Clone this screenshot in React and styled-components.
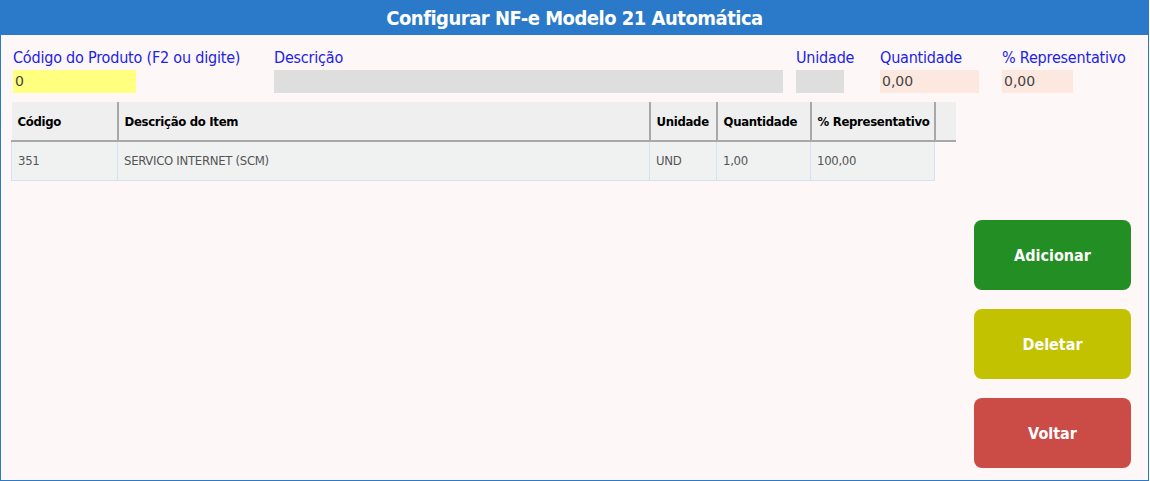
import React from 'react';
import styled, { createGlobalStyle } from 'styled-components';

const GlobalStyle = createGlobalStyle`
  html, body {
    margin: 0;
    padding: 0;
    background: #ffffff;
  }
  * { box-sizing: border-box; }
`;

const narrow = `"DejaVu Sans Condensed", "DejaVu Sans", sans-serif`;

const Window = styled.div`
  width: 1149px;
  height: 481px;
  background: #fdf8f7;
  border: 1px solid #2a7ac9;
  border-top: none;
  display: flex;
  flex-direction: column;
`;

const Header = styled.div`
  height: 35px;
  background: #2a7ac9;
  color: #ffffff;
  display: flex;
  align-items: center;
  justify-content: center;
  font-family: ${narrow};
  font-weight: 700;
  font-size: 20px;
  letter-spacing: -0.5px;
`;

const FieldRow = styled.div`
  display: flex;
  padding: 13px 0 0 12px;
  height: 67px;
`;

const Field = styled.div`
  display: flex;
  flex-direction: column;
  width: ${({ $w }) => $w}px;
`;

const Label = styled.label`
  font-family: ${narrow};
  font-size: 16px;
  letter-spacing: -0.2px;
  color: #2222e6;
  height: 22px;
  white-space: nowrap;
`;

const Input = styled.div`
  width: ${({ $w }) => $w}px;
  height: 23px;
  background: ${({ $bg }) => $bg};
  font-family: "DejaVu Sans", sans-serif;
  font-size: 14px;
  color: #444;
  padding: 3px 2px 0;
`;

const Body = styled.div`
  flex: 1;
  display: flex;
  padding: 0 17px 0 10px;
`;

const TableWrap = styled.div`
  flex: 1;
`;

const Table = styled.table`
  border-collapse: collapse;
  table-layout: fixed;
  width: 944px;
  font-family: ${narrow};
`;

const Th = styled.th`
  width: ${({ $w }) => $w}px;
  height: 39px;
  background: #efefef;
  text-align: left;
  padding: 0 6px;
  font-weight: 700;
  font-size: 13px;
  letter-spacing: -0.3px;
  white-space: nowrap;
  color: #000;
  border-bottom: 2px solid #a8a8a8;
  border-right: 2px solid #a8a8a8;
  &:last-child { border-right: none; }
`;

const Td = styled.td`
  height: 39px;
  background: ${({ $empty }) => ($empty ? 'transparent' : '#f0f2f2')};
  padding: 0 6px;
  color: #555;
  font-size: 13px;
  letter-spacing: -0.3px;
  white-space: nowrap;
  border: ${({ $empty }) => ($empty ? 'none' : '1px solid #d6e2f4')};
`;

const Actions = styled.div`
  display: flex;
  flex-direction: column;
  gap: 19px;
  padding-top: 118px;
`;

const Button = styled.button`
  width: 157px;
  height: 70px;
  border: none;
  border-radius: 8px;
  background: ${({ $bg }) => $bg};
  color: #ffffff;
  font-family: ${narrow};
  font-weight: 700;
  font-size: 16px;
  cursor: pointer;
`;

const columns = [
  { label: 'Código', w: 106 },
  { label: 'Descrição do Item', w: 532 },
  { label: 'Unidade', w: 67 },
  { label: 'Quantidade', w: 94 },
  { label: '% Representativo', w: 124 },
  { label: '', w: 21 },
];

const rows = [['351', 'SERVICO INTERNET (SCM)', 'UND', '1,00', '100,00']];

export default function App() {
  return (
    <>
      <GlobalStyle />
      <Window>
        <Header>Configurar NF-e Modelo 21 Automática</Header>
        <FieldRow>
          <Field $w={261}>
            <Label>Código do Produto (F2 ou digite)</Label>
            <Input $w={123} $bg="#ffff80">0</Input>
          </Field>
          <Field $w={522}>
            <Label>Descrição</Label>
            <Input $w={509} $bg="#dedede" />
          </Field>
          <Field $w={84}>
            <Label>Unidade</Label>
            <Input $w={48} $bg="#dedede" />
          </Field>
          <Field $w={122}>
            <Label>Quantidade</Label>
            <Input $w={99} $bg="#fde8e0">0,00</Input>
          </Field>
          <Field $w={140}>
            <Label>% Representativo</Label>
            <Input $w={71} $bg="#fde8e0">0,00</Input>
          </Field>
        </FieldRow>
        <Body>
          <TableWrap>
            <Table>
              <thead>
                <tr>
                  {columns.map((c) => (
                    <Th key={c.label || 'x'} $w={c.w}>{c.label}</Th>
                  ))}
                </tr>
              </thead>
              <tbody>
                {rows.map((r) => (
                  <tr key={r[0]}>
                    {r.map((v, i) => (
                      <Td key={i}>{v}</Td>
                    ))}
                    <Td $empty />
                  </tr>
                ))}
              </tbody>
            </Table>
          </TableWrap>
          <Actions>
            <Button $bg="#238e23">Adicionar</Button>
            <Button $bg="#c2c200">Deletar</Button>
            <Button $bg="#cb4b47">Voltar</Button>
          </Actions>
        </Body>
      </Window>
    </>
  );
}
